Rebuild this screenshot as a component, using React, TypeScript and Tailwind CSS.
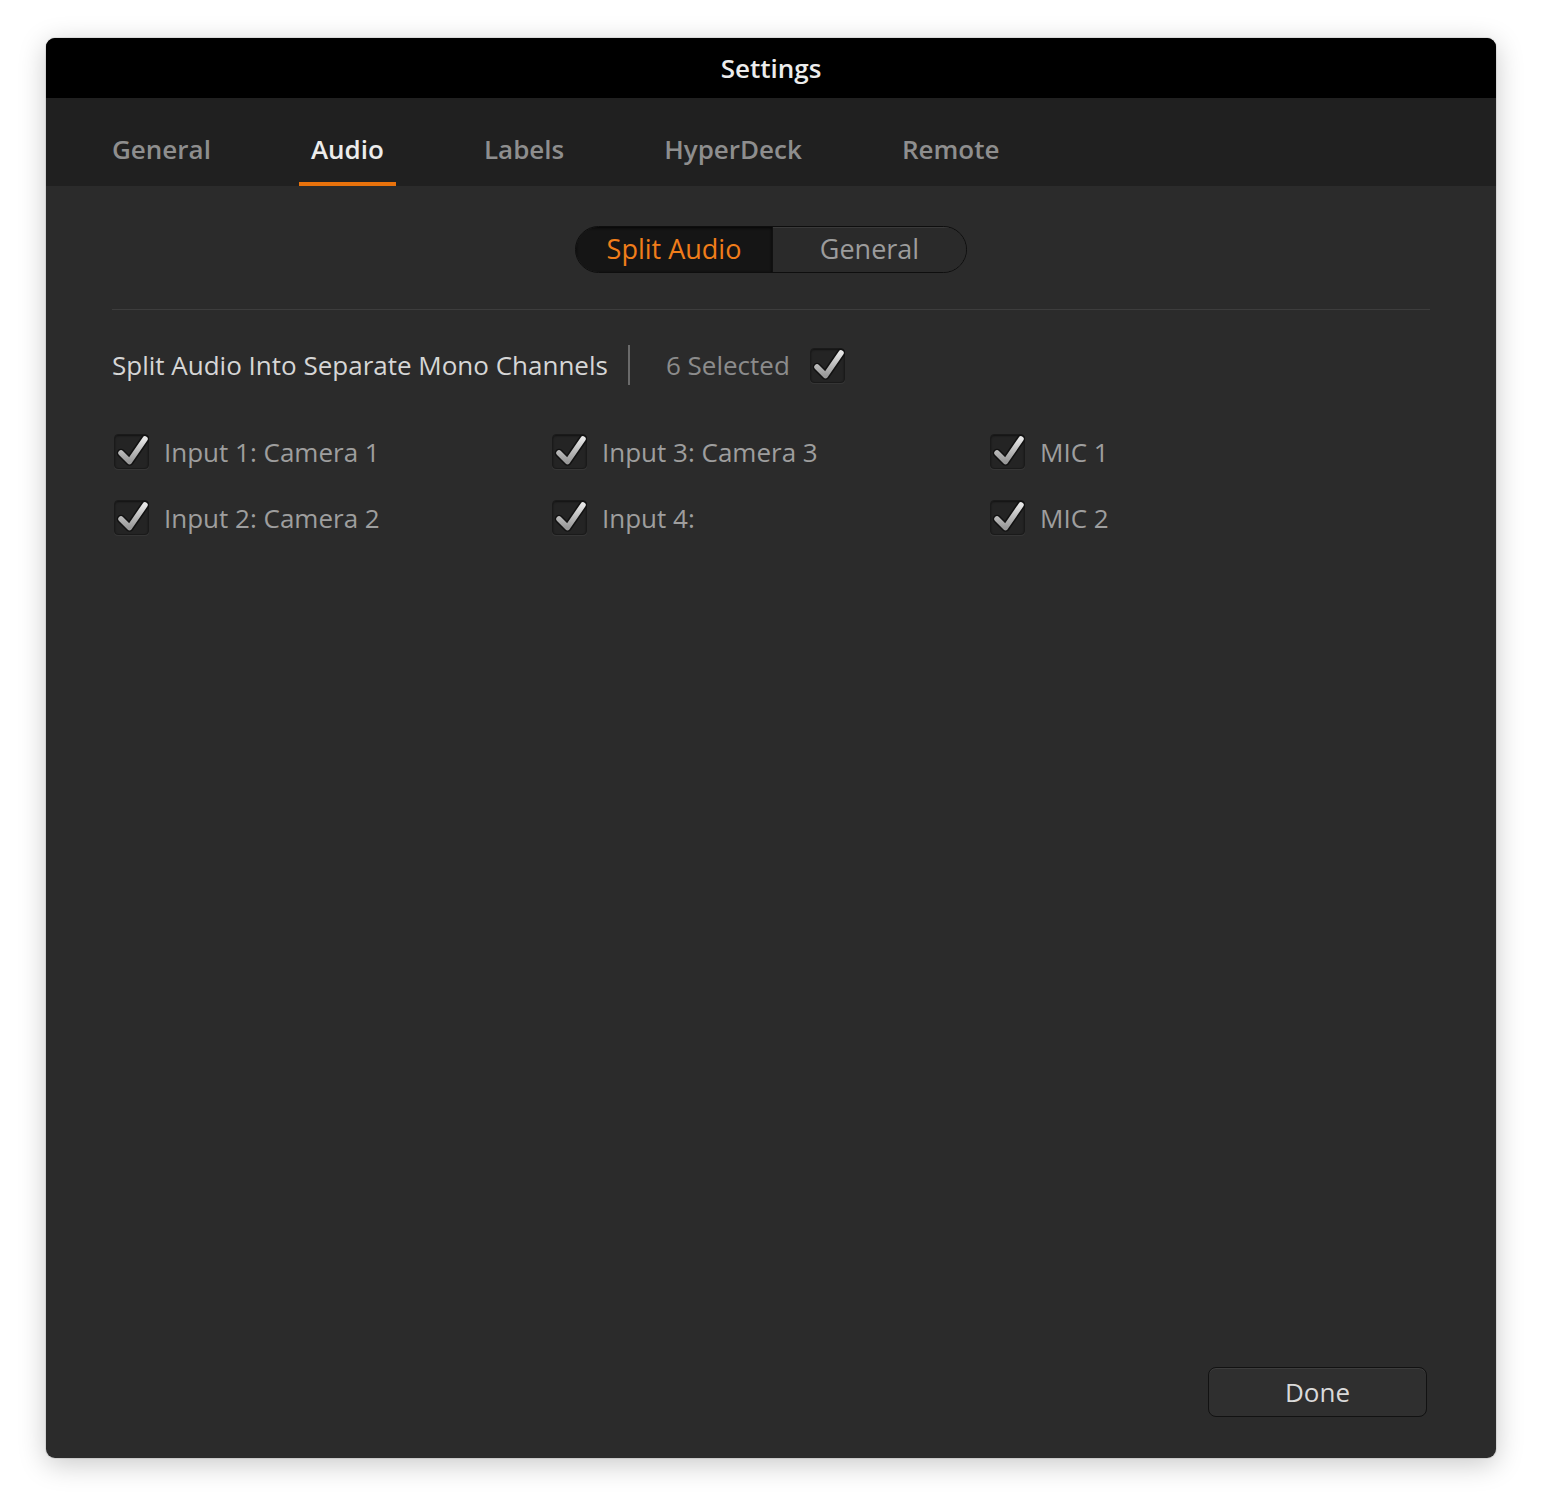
import React from 'react';

const font = { fontFamily: '"Open Sans", "Noto Sans", sans-serif' };

const Check = ({ checked = true }: { checked?: boolean }) => {
  return (
    <div className="relative w-[35px] h-[35px] shrink-0">
      {/* box */}
      <div className="w-[35px] h-[35px] rounded-[4px] bg-[#242424] border border-[#1a1a1a] shadow-[inset_0_1px_2px_rgba(0,0,0,0.5),0_1px_0_rgba(255,255,255,0.05)]" />
      {checked && (
        <svg
          className="absolute left-0 top-0"
          width="35"
          height="35"
          viewBox="0 0 35 35"
        >
          <defs>
            <linearGradient id="ck" x1="0" y1="0" x2="0" y2="1">
              <stop offset="0" stopColor="#e6e6e6" />
              <stop offset="0.5" stopColor="#bdbdbd" />
              <stop offset="1" stopColor="#9a9a9a" />
            </linearGradient>
          </defs>
          <path
            d="M7 19 L15.5 27.5 L31 5"
            fill="none"
            stroke="#111"
            strokeWidth="8.5"
            strokeLinecap="round"
            strokeLinejoin="round"
          />
          <path
            d="M7 19 L15.5 27.5 L31 5"
            fill="none"
            stroke="url(#ck)"
            strokeWidth="5.5"
            strokeLinecap="round"
            strokeLinejoin="round"
          />
        </svg>
      )}
    </div>
  );
};

const tabs = ['General', 'Audio', 'Labels', 'HyperDeck', 'Remote'];

const inputs = [
  ['Input 1: Camera 1', 'Input 2: Camera 2'],
  ['Input 3: Camera 3', 'Input 4:'],
  ['MIC 1', 'MIC 2'],
];

const App = () => {
  return (
    <div className="min-h-[1512px] bg-white pt-[38px] pl-[46px]" style={font}>
      <div className="w-[1450px] h-[1420px] rounded-[9px] overflow-hidden flex flex-col bg-[#2b2b2b] shadow-[0_6px_28px_rgba(0,0,0,0.22),0_0_0_1px_rgba(0,0,0,0.08)]">
        {/* Title bar */}
        <div className="h-[60px] bg-black flex items-center justify-center">
          <span className="text-[26px] font-semibold text-[#ececec]">Settings</span>
        </div>

        {/* Tabs */}
        <div className="h-[88px] bg-[#202020] flex items-stretch pl-[54px] gap-[76px]">
          {tabs.map((t) => {
            const active = t === 'Audio';
            return (
              <div
                key={t}
                className={
                  'px-3 flex items-center border-b-4 pt-[18px] text-[26px] font-semibold ' +
                  (active
                    ? 'border-[#e8720c] text-[#ececec]'
                    : 'border-transparent text-[#8e8e8e]')
                }
              >
                {t}
              </div>
            );
          })}
        </div>

        {/* Content */}
        <div className="flex-1 flex flex-col px-[66px]">
          {/* Segmented control */}
          <div className="flex justify-center pt-[40px]">
            <div className="flex h-[47px] rounded-full border border-[#0e0e0e] overflow-hidden">
              <div className="w-[196px] flex items-center justify-center bg-[#151515] shadow-[inset_0_1px_3px_rgba(0,0,0,0.8)] text-[27px] text-[#f07d1a]">
                Split Audio
              </div>
              <div className="w-[194px] flex items-center justify-center bg-[#2a2a2a] border-l border-[#111] shadow-[inset_0_1px_0_rgba(255,255,255,0.08)] text-[27px] text-[#9c9c9c]">
                General
              </div>
            </div>
          </div>

          {/* divider */}
          <div className="mt-[36px] h-px bg-[#3d3d3d]" />

          {/* Split row */}
          <div className="mt-[35px] flex items-center h-[40px]">
            <span className="text-[26px] text-[#d6d6d6]">
              Split Audio Into Separate Mono Channels
            </span>
            <div className="ml-[20px] w-[2px] h-[40px] bg-[#6a6a6a]" />
            <span className="ml-[36px] text-[26px] text-[#8c8c8c]">6 Selected</span>
            <div className="ml-[20px]">
              <Check />
            </div>
          </div>

          {/* Inputs grid */}
          <div className="mt-[49px] flex pl-[2px]">
            {inputs.map((col, i) => (
              <div key={i} className="w-[438px] flex flex-col gap-[31px]">
                {col.map((label) => (
                  <div key={label} className="flex items-center gap-[15px] h-[35px]">
                    <Check />
                    <span className="text-[26px] text-[#9e9e9e] pt-[2px]">{label}</span>
                  </div>
                ))}
              </div>
            ))}
          </div>

          <div className="flex-1" />

          {/* Done */}
          <div className="flex justify-end pr-[3px] pb-[41px]">
            <button className="w-[219px] h-[50px] rounded-[8px] border border-[#121212] bg-[#2f2f2f] shadow-[inset_0_1px_0_rgba(255,255,255,0.07)] text-[26px] text-[#dadada]">
              Done
            </button>
          </div>
        </div>
      </div>
    </div>
  );
};

export default App;
